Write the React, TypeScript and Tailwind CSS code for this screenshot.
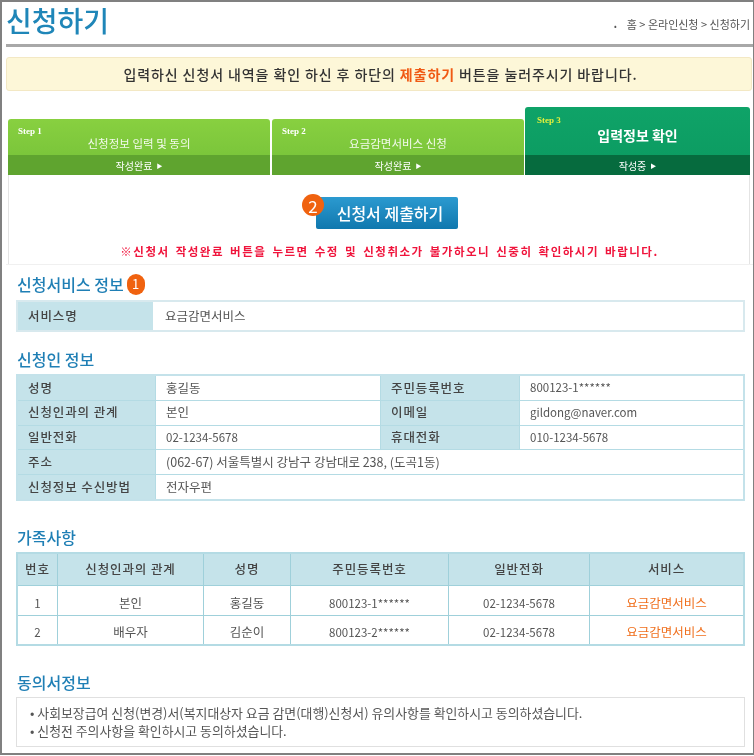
const labelCell = "flex items-center bg-[#c5e3ea] pl-[10px] text-[12.5px] font-medium tracking-[0.9px] text-[#444]"
const valueCell = "flex items-center bg-white pl-[10px] text-[#555]"

const applicant = [
  ["성명", "홍길동", "주민등록번호", "800123-1******"],
  ["신청인과의 관계", "본인", "이메일", "gildong@naver.com"],
  ["일반전화", "02-1234-5678", "휴대전화", "010-1234-5678"],
]

const family = [
  ["1", "본인", "홍길동", "800123-1******", "02-1234-5678"],
  ["2", "배우자", "김순이", "800123-2******", "02-1234-5678"],
]

const familyHead = ["번호", "신청인과의 관계", "성명", "주민등록번호", "일반전화", "서비스"]

function sizeOf(text: string) {
  return /^[0-9a-z]/.test(text) ? "text-[11.5px]" : "text-[12.5px]"
}

function Heading({ children }: { children: React.ReactNode }) {
  return <h2 className="text-[16px] leading-[20px] font-medium text-[#1f7fb5]">{children}</h2>
}

function StepTab({ step, title, status }: { step: string; title: string; status: string }) {
  return (
    <div className="flex h-[56px] flex-col overflow-hidden rounded-t-[3px] bg-gradient-to-b from-[#88d040] to-[#74c038]">
      <div className="relative flex-1 text-center text-[11.5px] text-white/90">
        <span className="absolute top-[6px] left-[10px] font-['Liberation_Serif',serif] text-[9px] font-bold text-white">{step}</span>
        <span className="relative top-[16px]">{title}</span>
      </div>
      <div className="flex h-[20px] items-center justify-center gap-1 bg-[#5fa42f] text-[10px] text-white">
        {status}
        <span className="text-[6px]">▶</span>
      </div>
    </div>
  )
}

export default function App() {
  return (
    <div className="h-[756px] w-[754px] overflow-hidden bg-white font-['Noto_Sans_CJK_KR','Noto_Sans',sans-serif] blur-[0.35px]">
      <div className="h-[755px] border-t-2 border-r border-b-2 border-l-2 border-[#808080]">
        <header className="mx-[4px] mr-0 flex h-[45px] items-center justify-between border-b-[3px] border-[#a8a8a8] pb-[6px]">
          <h1 className="text-[28px] leading-none font-medium text-[#1f86b8]">신청하기</h1>
          <p className="mt-[9px] mr-[3px] text-[11px] tracking-[0px] text-[#555]">
            <span className="mr-[10px] text-[8px]">•</span>홈 &gt; 온라인신청 &gt; 신청하기
          </p>
        </header>

        <div className="mx-[4px] mt-[10px] mr-[1px] flex h-[34px] items-center justify-center rounded-[3px] border border-[#f3e8c4] bg-[#fdf7d8] pl-[3px] text-[14px] font-medium tracking-[0.9px] text-[#333]">
          입력하신 신청서 내역을 확인 하신 후 하단의&nbsp;<span className="font-bold text-[#f05a14]">제출하기</span>&nbsp;버튼을 눌러주시기 바랍니다.
        </div>

        <div className="mt-[16px] ml-[6px] flex h-[68px] w-[742px] items-end">
          <div className="w-[262px]">
            <StepTab step="Step 1" title="신청정보 입력 및 동의" status="작성완료" />
          </div>
          <div className="ml-[2px] w-[252px]">
            <StepTab step="Step 2" title="요금감면서비스 신청" status="작성완료" />
          </div>
          <div className="ml-[1px] flex h-[68px] w-[225px] flex-col overflow-hidden rounded-t-[3px] bg-gradient-to-b from-[#0fa368] to-[#0b9a60]">
            <div className="relative flex-1 text-center text-[14px] font-bold text-white">
              <span className="absolute top-[7px] left-[12px] font-['Liberation_Serif',serif] text-[9px] font-bold text-[#e4f03c]">Step 3</span>
              <span className="relative top-[18px]">입력정보 확인</span>
            </div>
            <div className="flex h-[20px] items-center justify-center gap-1 bg-[#066b3e] text-[10px] text-white">
              작성중
              <span className="text-[6px]">▶</span>
            </div>
          </div>
        </div>

        <div className="ml-[6px] h-[89px] w-[742px] border-x border-[#e4e4e4] pt-[22px]">
          <div className="flex justify-center pl-[16px]">
            <div className="relative">
              <span className="absolute top-[-3px] left-[-14px] flex h-[22px] w-[22px] items-center justify-center rounded-full bg-[#f0620f] text-[17px] leading-none text-white">2</span>
              <button className="h-[32px] w-[142px] rounded-[2px] bg-gradient-to-b from-[#2b9ad0] to-[#0f78ae] pl-[6px] text-[16px] font-medium text-white">신청서 제출하기</button>
            </div>
          </div>
          <p className="mt-[14px] pl-[21px] text-center text-[11.5px] font-bold tracking-[1.5px] [word-spacing:2px] text-[#f0143c]">
            ※신청서 작성완료 버튼을 누르면 수정 및 신청취소가 불가하오니 신중히 확인하시기 바랍니다.
          </p>
        </div>

        <main className="ml-[4px] border-t border-[#f0f0f0] pr-[8px] pl-[10px]">
          <div className="mt-[9px] ml-px flex h-[20px] items-center gap-[3px]">
            <Heading>신청서비스 정보</Heading>
            <span className="flex h-[21px] w-[18px] items-center justify-center rounded-full bg-[#f0620f] text-[13px] text-white">1</span>
          </div>
          <div className="mt-[6px] grid h-[32px] grid-cols-[135px_1fr] border-2 border-[#d8e9ee]">
            <div className={labelCell}>서비스명</div>
            <div className={valueCell + " pl-[12px] text-[12.5px]"}>요금감면서비스</div>
          </div>

          <div className="mt-[17px] ml-px">
            <Heading>신청인 정보</Heading>
          </div>
          <div className="mt-[5px] grid h-[127px] grid-cols-[137px_224px_138px_1fr] gap-px border-2 border-[#c4e2ea] bg-[#b4dbe4]">
            {applicant.map((row) => (
              <div key={row[0]} className="col-span-4 grid grid-cols-subgrid">
                <div className={labelCell}>{row[0]}</div>
                <div className={`${valueCell} ${sizeOf(row[1])}`}>{row[1]}</div>
                <div className={labelCell}>{row[2]}</div>
                <div className={`${valueCell} ${sizeOf(row[3])}`}>{row[3]}</div>
              </div>
            ))}
            <div className={labelCell}>주소</div>
            <div className={valueCell + " col-span-3 text-[12.5px]"}>(062-67) 서울특별시 강남구 강남대로 238, (도곡1동)</div>
            <div className={labelCell}>신청정보 수신방법</div>
            <div className={valueCell + " col-span-3 text-[12.5px]"}>전자우편</div>
          </div>

          <div className="mt-[26px] ml-px">
            <Heading>가족사항</Heading>
          </div>
          <div className="mt-[5px] grid h-[94px] grid-cols-[39px_145px_86px_157px_140px_1fr] grid-rows-[31px_1fr_1fr] gap-px border-2 border-[#b4dbe4] bg-[#9fd0da] text-center">
            {familyHead.map((h) => (
              <div key={h} className="flex items-center justify-center bg-[#c5e3ea] text-[12.5px] font-medium tracking-[0.9px] text-[#444]">
                {h}
              </div>
            ))}
            {family.map((row) => (
              <div key={row[0]} className="col-span-6 grid grid-cols-subgrid">
                {row.map((cell, i) => (
                  <div key={i} className={`flex items-center justify-center bg-white pt-[6px] text-[#555] ${sizeOf(cell)}`}>
                    {cell}
                  </div>
                ))}
                <div className="flex items-center justify-center bg-white pt-[6px] text-[12.5px] text-[#f0701e]">요금감면서비스</div>
              </div>
            ))}
          </div>

          <div className="mt-[26px] ml-px">
            <Heading>동의서정보</Heading>
          </div>
          <div className="mt-[5px] h-[50px] border border-[#e0e0e0] bg-white pt-[6px] pl-[13px] text-[12.9px] leading-[18px] text-[#555]">
            <p>• 사회보장급여 신청(변경)서(복지대상자 요금 감면(대행)신청서) 유의사항를 확인하시고 동의하셨습니다.</p>
            <p>• 신청전 주의사항을 확인하시고 동의하셨습니다.</p>
          </div>
        </main>
      </div>
    </div>
  )
}
